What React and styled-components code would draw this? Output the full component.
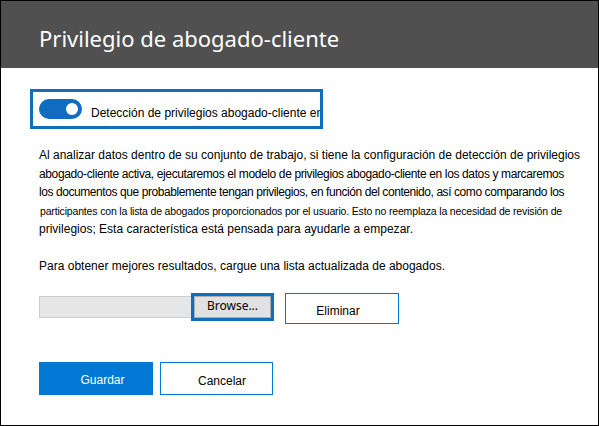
import React, { useLayoutEffect, useRef, useState } from "react";
import styled, { createGlobalStyle } from "styled-components";

const GlobalStyle = createGlobalStyle`
  html, body { margin: 0; padding: 0; background: #ffffff; }
  * { box-sizing: border-box; }
`;

const Frame = styled.div`
  width: 599px;
  height: 426px;
  border: 1px solid #000000;
  background: #ffffff;
  display: flex;
  flex-direction: column;
  font-family: "Liberation Sans", Arial, sans-serif;
  color: #000000;
  overflow: hidden;
`;

const Header = styled.header`
  height: 67px;
  flex: none;
  background: #505050;
  padding: 22px 0 0 38px;
`;

const Title = styled.h1`
  margin: 0;
  font-family: "Noto Sans", "Open Sans", sans-serif;
  font-weight: 400;
  font-size: 22px;
  line-height: normal;
  color: #ffffff;
`;

const Body = styled.main`
  display: flex;
  flex-direction: column;
  padding: 21px 0 0 38px;
`;

const ToggleBox = styled.div`
  width: 293px;
  height: 40px;
  margin-left: -9px;
  border: 3px solid #106ebe;
  padding-left: 6px;
  display: flex;
  align-items: center;
  gap: 8px;
  overflow: hidden;
`;

const Switch = styled.span`
  flex: none;
  width: 43px;
  height: 20px;
  border-radius: 10px;
  background: #0f6cc0;
  display: flex;
  align-items: center;
  justify-content: flex-end;
  padding-right: 4px;
`;

const Knob = styled.span`
  width: 12px;
  height: 12px;
  border-radius: 50%;
  background: #ffffff;
`;

const ToggleLabel = styled.span`
  font-size: 12px;
  white-space: nowrap;
  padding-top: 8px;
  margin-left: 1px;
`;

const Paragraph = styled.div`
  margin-top: 17px;
  display: flex;
  flex-direction: column;
`;

const LineBox = styled.div`
  white-space: nowrap;
  font-size: ${(p) => (p.$small ? "10.5px" : "12px")};
  line-height: 18.6px;
  padding-left: ${(p) => (p.$small ? "1px" : "0")};
`;

const LineText = styled.span`
  display: inline-block;
`;

function FitLine({ width, small, children }) {
  const ref = useRef(null);
  const [spacing, setSpacing] = useState(0);
  useLayoutEffect(() => {
    const el = ref.current;
    if (!el) return;
    el.style.letterSpacing = "0px";
    const natural = el.getBoundingClientRect().width;
    const chars = el.textContent.length;
    setSpacing((width - natural) / chars);
  }, [width, children]);
  return (
    <LineBox $small={small}>
      <LineText ref={ref} style={{ letterSpacing: `${spacing}px` }}>
        {children}
      </LineText>
    </LineBox>
  );
}

const Hint = styled.div`
  margin-top: 18px;
  display: flex;
  flex-direction: column;
`;

const FileRow = styled.div`
  margin-top: 17px;
  display: flex;
  align-items: flex-start;
`;

const FileField = styled.div`
  display: flex;
  align-items: center;
  height: 28px;
`;

const FilePath = styled.div`
  width: 152px;
  height: 22px;
  background: #e6e6e6;
  border: 1px solid #cccccc;
  border-right: none;
`;

const BrowseRing = styled.div`
  width: 83px;
  height: 28px;
  border: 3px solid #106ebe;
  display: flex;
`;

const BrowseButton = styled.button`
  flex: 1;
  margin: 0;
  padding: 0 0 2px 0;
  background: #e1e1e1;
  border: 1px solid #adadad;
  font-family: "Noto Sans", "Open Sans", sans-serif;
  font-size: 12px;
  color: #000000;
  display: flex;
  align-items: center;
  justify-content: center;
`;

const OutlineButton = styled.button`
  margin: 0 0 0 ${(p) => p.$gap || 0}px;
  width: ${(p) => p.$w}px;
  height: ${(p) => p.$h}px;
  background: #ffffff;
  border: 1px solid #0078d4;
  font-family: "Liberation Sans", Arial, sans-serif;
  font-size: 12px;
  color: #000000;
  padding: 5px ${(p) => p.$right || 0}px 0 ${(p) => p.$left || 0}px;
  display: flex;
  align-items: center;
  justify-content: center;
`;

const PrimaryButton = styled.button`
  margin: 0;
  width: 114px;
  height: 33px;
  background: #0078d4;
  border: none;
  font-family: "Liberation Sans", Arial, sans-serif;
  font-size: 12px;
  color: #ffffff;
  padding: 3px 0 0 13px;
  display: flex;
  align-items: center;
  justify-content: center;
`;

const Actions = styled.div`
  margin-top: 38px;
  display: flex;
  gap: 7px;
`;

export default function App() {
  return (
    <>
      <GlobalStyle />
      <Frame>
        <Header>
          <Title>Privilegio de abogado-cliente</Title>
        </Header>
        <Body>
          <ToggleBox>
            <Switch>
              <Knob />
            </Switch>
            <ToggleLabel>Detección de privilegios abogado-cliente en</ToggleLabel>
          </ToggleBox>
          <Paragraph>
            <FitLine width={541}>Al analizar datos dentro de su conjunto de trabajo, si tiene la configuración de detección de privilegios</FitLine>
            <FitLine width={525}>abogado-cliente activa, ejecutaremos el modelo de privilegios abogado-cliente en los datos y marcaremos</FitLine>
            <FitLine width={525}>los documentos que probablemente tengan privilegios, en función del contenido, así como comparando los</FitLine>
            <FitLine width={522} small>participantes con la lista de abogados proporcionados por el usuario. Esto no reemplaza la necesidad de revisión de</FitLine>
            <FitLine width={374}>privilegios; Esta característica está pensada para ayudarle a empezar.</FitLine>
          </Paragraph>
          <Hint>
            <FitLine width={406}>Para obtener mejores resultados, cargue una lista actualizada de abogados.</FitLine>
          </Hint>
          <FileRow>
            <FileField>
              <FilePath />
              <BrowseRing>
                <BrowseButton>Browse...</BrowseButton>
              </BrowseRing>
            </FileField>
            <OutlineButton $gap={11} $w={114} $h={31} $right={8}>Eliminar</OutlineButton>
          </FileRow>
          <Actions>
            <PrimaryButton>Guardar</PrimaryButton>
            <OutlineButton $w={113} $h={33} $left={11}>Cancelar</OutlineButton>
          </Actions>
        </Body>
      </Frame>
    </>
  );
}
